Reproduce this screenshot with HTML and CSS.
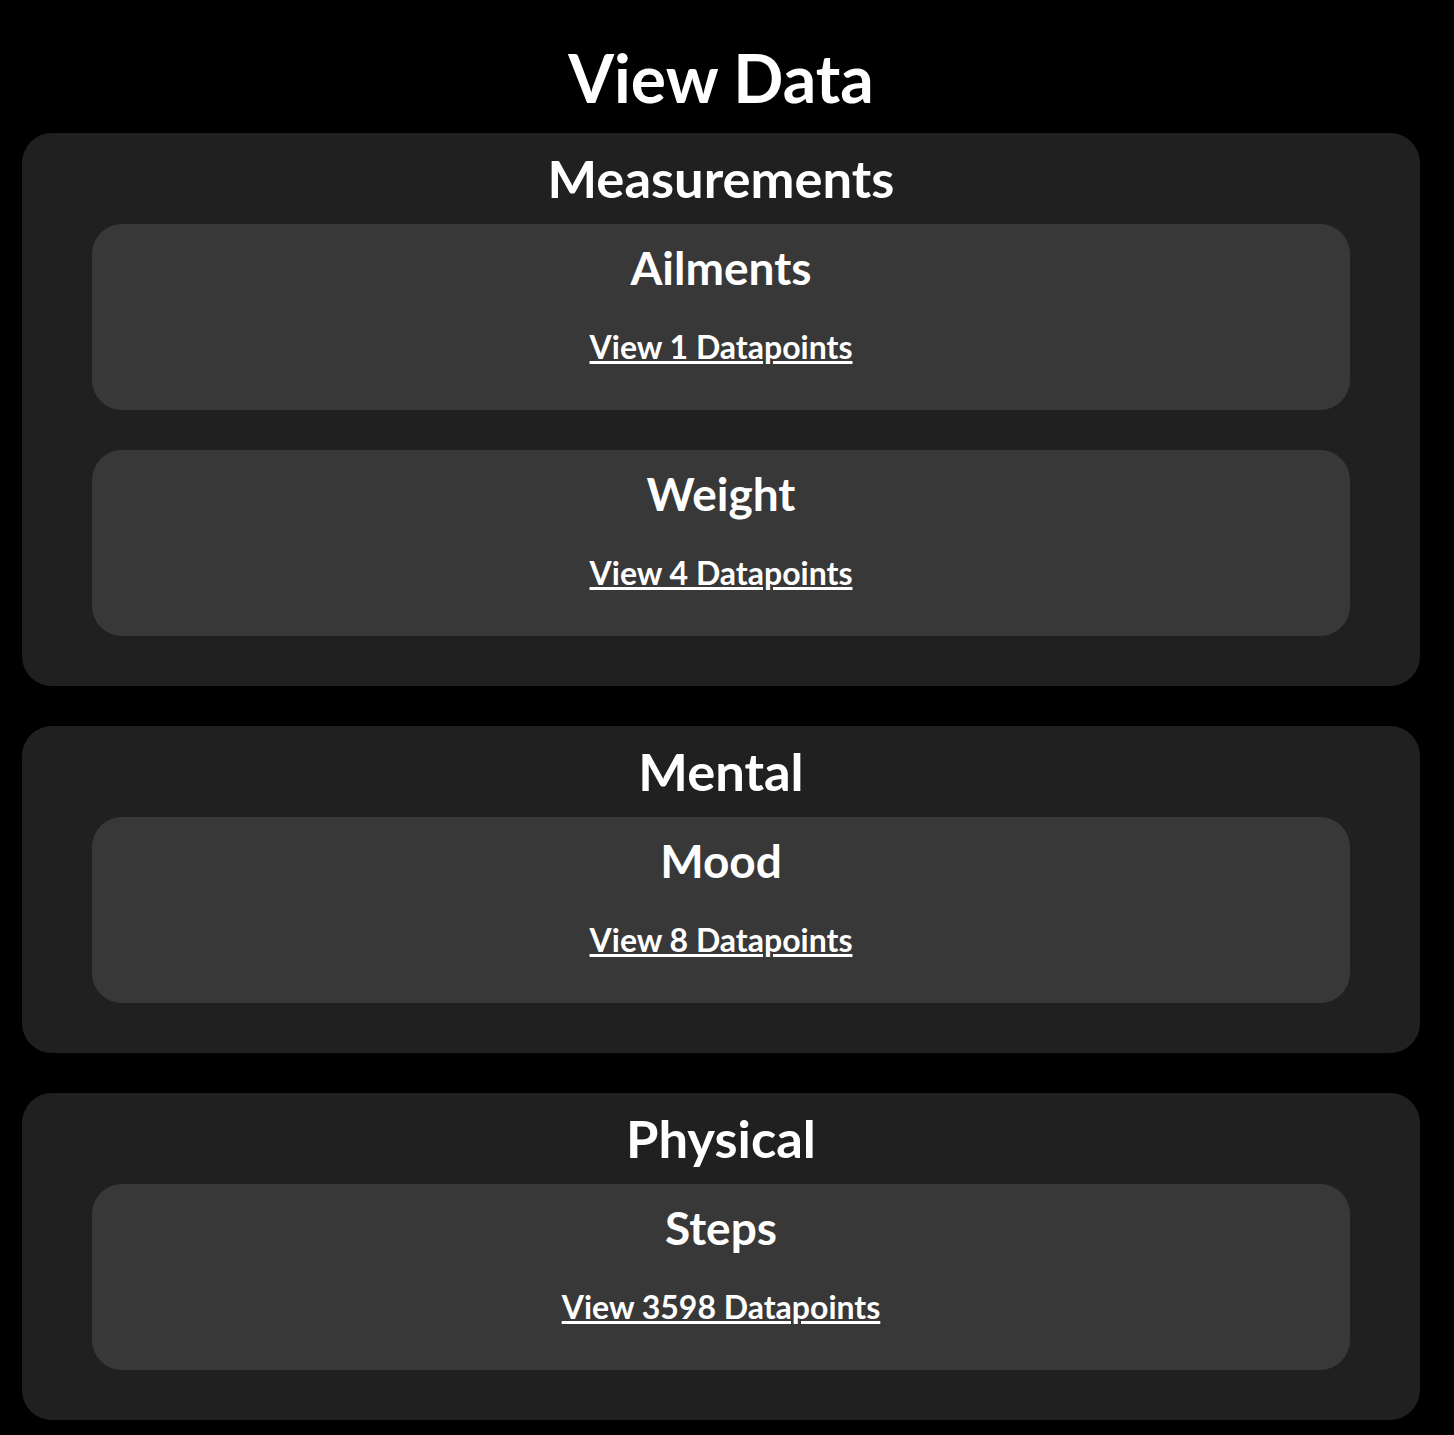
FILE: index.html
```html
<!DOCTYPE html>
<html lang="en">
<head>
<meta charset="utf-8">
<title>View Data</title>
<link rel="stylesheet" href="styles.css">
</head>
<body>
<main class="page">
  <h1 class="title">View Data</h1>
  <section class="group">
    <h2 class="group-title">Measurements</h2>
    <div class="item">
      <h3 class="item-title">Ailments</h3>
      <a class="item-link" href="#">View 1 Datapoints</a>
    </div>
    <div class="item">
      <h3 class="item-title">Weight</h3>
      <a class="item-link" href="#">View 4 Datapoints</a>
    </div>
  </section>
  <section class="group">
    <h2 class="group-title">Mental</h2>
    <div class="item">
      <h3 class="item-title">Mood</h3>
      <a class="item-link" href="#">View 8 Datapoints</a>
    </div>
  </section>
  <section class="group">
    <h2 class="group-title">Physical</h2>
    <div class="item">
      <h3 class="item-title">Steps</h3>
      <a class="item-link" href="#">View 3598 Datapoints</a>
    </div>
  </section>
</main>
</body>
</html>
```

FILE: styles.css
```css
html, body {
  margin: 0;
  padding: 0;
  background: #000;
}
body {
  font-family: Lato, "Open Sans", sans-serif;
  color: #fff;
}
.page {
  width: 1398px;
  margin-left: 22px;
  display: flex;
  flex-direction: column;
  gap: 40px;
  padding-bottom: 15px;
}
.title {
  margin: 38px 0 -24px;
  font-size: 66px;
  font-weight: 700;
  line-height: 1.2;
  text-align: center;
}
.group {
  background: #202020;
  border-radius: 30px;
  padding: 13px 70px 50px;
  display: flex;
  flex-direction: column;
  gap: 40px;
}
.group-title {
  margin: 0 0 -25px;
  font-size: 52.5px;
  font-weight: 700;
  line-height: 63px;
  text-align: center;
}
.item {
  background: #383838;
  border-radius: 30px;
  padding: 16px 20px 43.4px;
  display: flex;
  flex-direction: column;
  align-items: center;
}
.item-title {
  margin: 0 0 33px;
  font-size: 46px;
  font-weight: 700;
  line-height: 1.2;
}
.item-link {
  font-size: 32px;
  font-weight: 700;
  line-height: 1.2;
  color: #fff;
  text-decoration: underline;
}
```
